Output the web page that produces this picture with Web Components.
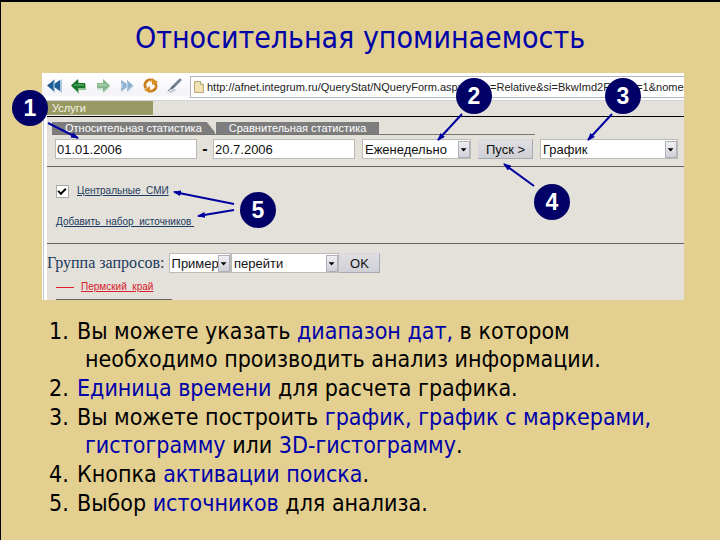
<!DOCTYPE html>
<html lang="ru">
<head>
<meta charset="utf-8">
<title>Относительная упоминаемость</title>
<style>
  body {
    margin: 0;
    min-height: 100vh;
    background-color: #e3cf90;
  }
</style>
</head>
<body>

<slide-page>
  <span slot="title">Относительная упоминаемость</span>

  <browser-shot>
    <tool-bar slot="bar"></tool-bar>
    <query-form></query-form>

    <call-arrows slot="marks"></call-arrows>
    <call-out slot="marks" data-at="-12,35">1</call-out>
    <call-out slot="marks" data-at="432,23">2</call-out>
    <call-out slot="marks" data-at="581,23">3</call-out>
    <call-out slot="marks" data-at="510,129">4</call-out>
    <call-out slot="marks" data-at="216,137">5</call-out>
  </browser-shot>

  <note-list>
    <note-item data-number="1">Вы можете указать <em>диапазон дат,</em> в котором<br>необходимо производить анализ информации.</note-item>
    <note-item data-number="2"><em>Единица времени</em> для расчета графика.</note-item>
    <note-item data-number="3">Вы можете построить <em>график, график с маркерами,</em><br><em>гистограмму</em> или <em>3D-гистограмму</em>.</note-item>
    <note-item data-number="4">Кнопка <em>активации поиска</em>.</note-item>
    <note-item data-number="5">Выбор <em>источников</em> для анализа.</note-item>
  </note-list>
</slide-page>

<script>
class Part extends HTMLElement {
  constructor() {
    super();

    const template = document.createElement('template');
    template.innerHTML = this.constructor.template;
    this.attachShadow({ mode: 'open' }).append(template.content.cloneNode(true));
  }
}

class SlidePage extends Part {}

SlidePage.template = `
  <h1><slot name="title"></slot></h1>
  <slot></slot>
  <style>
    :host {
      display: block;
      box-sizing: border-box;
      min-height: 100vh;
      padding: 16px 36px 16px 41px;
      border-top: 2px solid #000;
      border-left: 1px solid #000;
      background-color: #e3cf90;
      font-family: "DejaVu Sans Condensed", "Noto Sans", sans-serif;
      color: #000;
      overflow: hidden;
    }

    h1 {
      margin: 0 0 15px;
      padding-right: 6px;
      font-size: 30px;
      line-height: 40px;
      font-weight: 400;
      text-align: center;
      color: #0000a8;
    }
  </style>
`;

class BrowserShot extends Part {}

BrowserShot.template = `
  <slot name="bar"></slot>
  <main><slot></slot></main>
  <slot name="marks"></slot>
  <style>
    :host {
      display: block;
      position: relative;
      background-color: #fff;
      font-family: "Liberation Sans", Arial, sans-serif;
    }

    main {
      margin-left: 1px;
      padding-left: 3px;
      border-left: 1px solid #c4c4cc;
    }
  </style>
`;

class ToolBar extends Part {}

ToolBar.template = `
  <nav>
    <button aria-label="В начало">
      <svg viewBox="0 0 18 18">
        <path fill="#a9c6dd" d="M9 2v5h1l6-5v14l-6-5H9v5L2 9.500z"/>
        <path fill="#1f5c97" d="M8 3v4l6-4v11l-6-4v4L1 8.500z"/>
        <path stroke="#bcdcf0" d="M8 5v7"/>
      </svg>
    </button>
    <button aria-label="Назад">
      <svg viewBox="0 0 18 18">
        <path fill="#8fc08f" d="M9 3v4h7v6H9v4L2 10z"/>
        <path fill="#16782e" d="M8 2v4h7v5H8v4L1 8.500z"/>
        <path stroke="#6fc26f" d="M4 8h10"/>
      </svg>
    </button>
    <button aria-label="Вперед">
      <svg viewBox="0 0 18 18">
        <path fill="#cfe2cf" d="M9 3v4H3v6h6v4l7-7z"/>
        <path fill="#85b68c" d="M9 2v4H3v5h6v4l7-6.500z"/>
        <path stroke="#c5e2c5" d="M4 8h9"/>
      </svg>
    </button>
    <button aria-label="В конец">
      <svg viewBox="0 0 18 18">
        <path fill="#d3deea" d="M3 3v13l6-5v5l7-7-7-6v5z"/>
        <path fill="#8fb0cf" d="M3 3v11l6-4v4l6-5.500L9 3v4z"/>
        <path stroke="#d8e8f5" d="M9 5v7M4 6v5"/>
      </svg>
    </button>
    <button aria-label="Обновить">
      <svg viewBox="0 0 18 18" fill="none">
        <path stroke="#c87a1c" stroke-width="3" d="M4 11a5 5 0 0 1 7-7M13 6a5 5 0 0 1-7 7"/>
        <path fill="#d98e24" d="M10 1l6 4-6 3zM8 9v7l-6-3z"/>
        <path stroke="#f5d88c" d="M4 9a5 5 0 0 1 6-5M13 8a5 5 0 0 1-5 5"/>
      </svg>
    </button>
    <button aria-label="Правка">
      <svg viewBox="0 0 18 18" fill="none" stroke-linecap="round">
        <path stroke="#c9cdd6" stroke-width="2" d="M4 15l5-2"/>
        <path stroke="#7a8292" stroke-width="3" d="M6 11l8-8"/>
        <path stroke="#59606e" d="M2 14l6-5"/>
      </svg>
    </button>
  </nav>
  <div class="address">
    <svg viewBox="0 0 12 14">
      <path fill="#efe3b4" stroke="#b8a878" d="M1.500 1.500h6l3 3v8h-9z"/>
      <path fill="#fffbe6" stroke="#b8a878" d="M7.500 1.500v3h3"/>
    </svg>
    <input aria-label="Адрес" value="http://afnet.integrum.ru/QueryStat/NQueryForm.aspx?type=Relative&amp;si=BkwImd2R&amp;stat=1&amp;nomen">
  </div>
  <style>
    :host {
      display: flex;
      gap: 6px;
      height: 28px;
      padding-left: 4px;
      box-sizing: border-box;
      background: linear-gradient(#fff 2px, #f3f3f8 22px, #fff 24px);
      border-bottom: 1px solid #d4d4da;
    }

    nav {
      display: flex;
      align-items: center;
      gap: 6px;
      padding-bottom: 2px;
    }

    button {
      display: flex;
      padding: 0;
      border: 0;
      background: none;
    }

    button svg {
      width: 18px;
      height: 18px;
    }

    .address {
      flex: 1;
      display: flex;
      align-items: center;
      gap: 2px;
      height: 20px;
      margin-top: 3px;
      padding-left: 2px;
      border: 1px solid #b4b4c0;
      border-right: 0;
      background-color: #fff;
    }

    .address svg {
      width: 12px;
      height: 14px;
    }

    input {
      flex: 1;
      min-width: 0;
      padding: 0;
      border: 0;
      outline: 0;
      background: none;
      font: 11px "Liberation Sans", Arial, sans-serif;
      color: #222;
    }
  </style>
`;

class DropDown extends Part {
  connectedCallback() {
    const select = this.shadowRoot.querySelector('select');
    select.replaceChildren(new Option(this.getAttribute('data-value')));
    if (this.hasAttribute('data-label')) {
      select.setAttribute('aria-label', this.getAttribute('data-label'));
    }
  }
}

DropDown.template = `
  <label>
    <slot></slot>
    <span class="box">
      <select></select>
      <svg viewBox="0 0 12 17"><path d="M2 7h7L5.500 11z"/></svg>
    </span>
  </label>
  <style>
    :host {
      display: block;
    }

    label {
      display: flex;
      align-items: center;
      gap: 4px;
    }

    .box {
      flex: 1;
      display: grid;
      align-items: center;
      box-sizing: border-box;
      height: 20px;
      border: 1px solid #bcbab4;
      background-color: #fff;
    }

    select, svg {
      grid-area: 1 / 1;
    }

    select {
      appearance: none;
      width: 100%;
      min-width: 0;
      padding: 0 11px 0 2px;
      border: 0;
      outline: 0;
      background: none;
      font: 13px "Liberation Sans", Arial, sans-serif;
      color: #111;
    }

    svg {
      justify-self: end;
      width: 12px;
      height: 17px;
      border: 1px solid #b0b0b8;
      box-sizing: border-box;
      background: linear-gradient(#f0f0f4, #cfcfd8);
      pointer-events: none;
    }
  </style>
`;

class QueryForm extends Part {}

QueryForm.template = `
  <div class="services"><span>Услуги</span></div>
  <form onsubmit="return false">
    <div class="tabs">
      <button class="tab cut">Относительная статистика</button>
      <button class="tab">Сравнительная статистика</button>
    </div>
    <div class="row">
      <input class="date" aria-label="Дата с" value="01.01.2006">
      <b>-</b>
      <input class="date" aria-label="Дата по" value="20.7.2006">
      <drop-down class="period" data-label="Единица времени" data-value="Еженедельно"></drop-down>
      <button class="push">Пуск &gt;</button>
      <drop-down class="chart" data-label="Вид графика" data-value="График"></drop-down>
    </div>
    <div class="sources">
      <div class="source">
        <input type="checkbox" checked aria-label="Центральные СМИ">
        <a href="#">Центральные &nbsp;СМИ</a>
      </div>
      <a href="#">Добавить &nbsp;набор &nbsp;источников&nbsp;</a>
    </div>
    <div class="group">
      <drop-down class="name" data-value="Пример"><span>Группа запросов:</span></drop-down>
      <drop-down class="action" data-label="Действие" data-value="перейти"></drop-down>
      <button class="push ok">OK</button>
    </div>
    <div class="legend"><i></i><a href="#">Пермский &nbsp;край</a></div>
    <hr>
  </form>
  <style>
    :host {
      display: block;
      background-color: #e3e1d9;
      color: #111;
    }

    button, input {
      box-sizing: border-box;
      margin: 0;
      font: 13px "Liberation Sans", Arial, sans-serif;
      color: #111;
    }

    .services {
      border-bottom: 1px solid #000;
    }

    .services span {
      display: block;
      width: 101px;
      padding-left: 5px;
      border-bottom: 1px solid #f4f4ee;
      background-color: #999963;
      font-size: 11px;
      line-height: 14px;
      color: #f4f4e8;
    }

    .tabs {
      display: flex;
      gap: 1px;
      width: 483px;
      margin: 5px 0 0 5px;
      border-bottom: 1px solid #77756f;
    }

    .tab {
      height: 12px;
      padding: 0 13px;
      border: 0;
      background-color: #7d7d7d;
      font-size: 11px;
      line-height: 12px;
      color: #fff;
    }

    .cut {
      clip-path: polygon(0 0, calc(100% - 8px) 0, 100% 10px, 100% 100%, 0 100%);
    }

    .row {
      display: flex;
      align-items: center;
      gap: 7px;
      padding: 4px 6px 7px 8px;
      border-bottom: 1px solid #66645e;
    }

    .row b {
      width: 2px;
      display: flex;
      justify-content: center;
    }

    .date {
      width: 142px;
      height: 20px;
      padding: 0 1px;
      border: 1px solid #bcbab4;
      background-color: #fff;
    }

    .period {
      width: 109px;
    }

    .push {
      width: 55px;
      height: 20px;
      padding: 0;
      border: 1px solid;
      border-color: #d8d8dc #a8a8b0 #a8a8b0 #d8d8dc;
      background: linear-gradient(#dedee2, #cfcfd6);
    }

    .chart {
      flex: 1;
    }

    .sources {
      display: flex;
      flex-direction: column;
      align-items: flex-start;
      gap: 17px;
      padding: 17px 0 14px 9px;
      border-bottom: 1px solid #66645e;
    }

    .source {
      display: flex;
      align-items: center;
      gap: 8px;
    }

    [type="checkbox"] {
      appearance: none;
      display: grid;
      width: 13px;
      height: 13px;
      border: 1px solid #a8a8a4;
      background-color: #fff;
    }

    [type="checkbox"]:checked::before {
      content: "";
      width: 6px;
      height: 3px;
      margin: 2px 1px;
      border: solid #000;
      border-width: 0 0 2px 2px;
      transform: rotate(-45deg);
    }

    a {
      font-size: 10px;
      line-height: 14px;
      color: #1d3a5f;
    }

    .group {
      display: flex;
      align-items: center;
      padding: 9px 0 7px;
    }

    .name span {
      font: 16px/20px "Liberation Serif", "Times New Roman", serif;
      color: #1d3a5f;
    }

    .name {
      width: 184px;
    }

    .action {
      width: 108px;
    }

    .ok {
      width: 41px;
    }

    .legend {
      display: flex;
      align-items: center;
      gap: 7px;
      padding-left: 9px;
    }

    .legend i {
      width: 18px;
      height: 1px;
      background-color: #e0202c;
    }

    .legend a {
      color: #d8202c;
    }

    hr {
      width: 116px;
      margin: 5px 0 0 9px;
      border: 0;
      border-top: 1px solid #66645e;
    }
  </style>
`;

class CallOut extends Part {
  connectedCallback() {
    const [x, y] = this.getAttribute('data-at').split(',');

    this.style.left = `${x}px`;
    this.style.top = `${y}px`;
  }
}

CallOut.template = `
  <slot></slot>
  <style>
    :host {
      position: absolute;
      display: grid;
      place-items: center;
      width: 36px;
      height: 36px;
      margin: -18px 0 0 -18px;
      border-radius: 50%;
      background-color: #000066;
      font: bold 23px "Liberation Sans", Arial, sans-serif;
      color: #fff;
    }
  </style>
`;

// Arrows run from each callout to the control that it names
class CallArrows extends Part {}

CallArrows.template = `
  <svg viewBox="0 0 642 227">
    <defs>
      <marker id="tip" viewBox="0 0 8 6" refX="7" refY="3" markerWidth="8" markerHeight="6" markerUnits="userSpaceOnUse" orient="auto">
        <path fill="#0000a0" d="M0 0l8 3-8 3z"/>
      </marker>
    </defs>
    <g stroke="#0000a0" stroke-width="2">
      <path marker-end="url(#tip)" d="M6 50L36 65"/>
      <path marker-end="url(#tip)" d="M420 41L396 67"/>
      <path marker-end="url(#tip)" d="M570 41L546 67"/>
      <path marker-end="url(#tip)" d="M492 113L462 91"/>
      <path marker-end="url(#tip)" d="M192 131L132 119"/>
      <path marker-end="url(#tip)" d="M192 137L156 143"/>
    </g>
  </svg>
  <style>
    :host {
      position: absolute;
      left: 0;
      top: 0;
      pointer-events: none;
    }

    svg {
      display: block;
      width: 642px;
      height: 227px;
    }
  </style>
`;

class NoteList extends Part {}

NoteList.template = `
  <slot></slot>
  <style>
    :host {
      display: flex;
      flex-direction: column;
      gap: 1px;
      padding: 17px 0 0 7px;
    }
  </style>
`;

class NoteItem extends Part {
  connectedCallback() {
    this.shadowRoot.querySelector('.number').innerText = `${this.getAttribute('data-number')}.`;
  }
}

NoteItem.template = `
  <span class="number"></span>
  <p><slot></slot></p>
  <style>
    :host {
      display: flex;
      font-size: 23px;
      line-height: 28px;
    }

    .number {
      flex: none;
      width: 36px;
    }

    p {
      margin: 0;
      text-indent: -8px;
    }

    ::slotted(em) {
      font-style: normal;
      color: #0000a8;
    }
  </style>
`;

customElements.define('slide-page', SlidePage);
customElements.define('browser-shot', BrowserShot);
customElements.define('tool-bar', ToolBar);
customElements.define('drop-down', DropDown);
customElements.define('query-form', QueryForm);
customElements.define('call-out', CallOut);
customElements.define('call-arrows', CallArrows);
customElements.define('note-list', NoteList);
customElements.define('note-item', NoteItem);
</script>
</body>
</html>
